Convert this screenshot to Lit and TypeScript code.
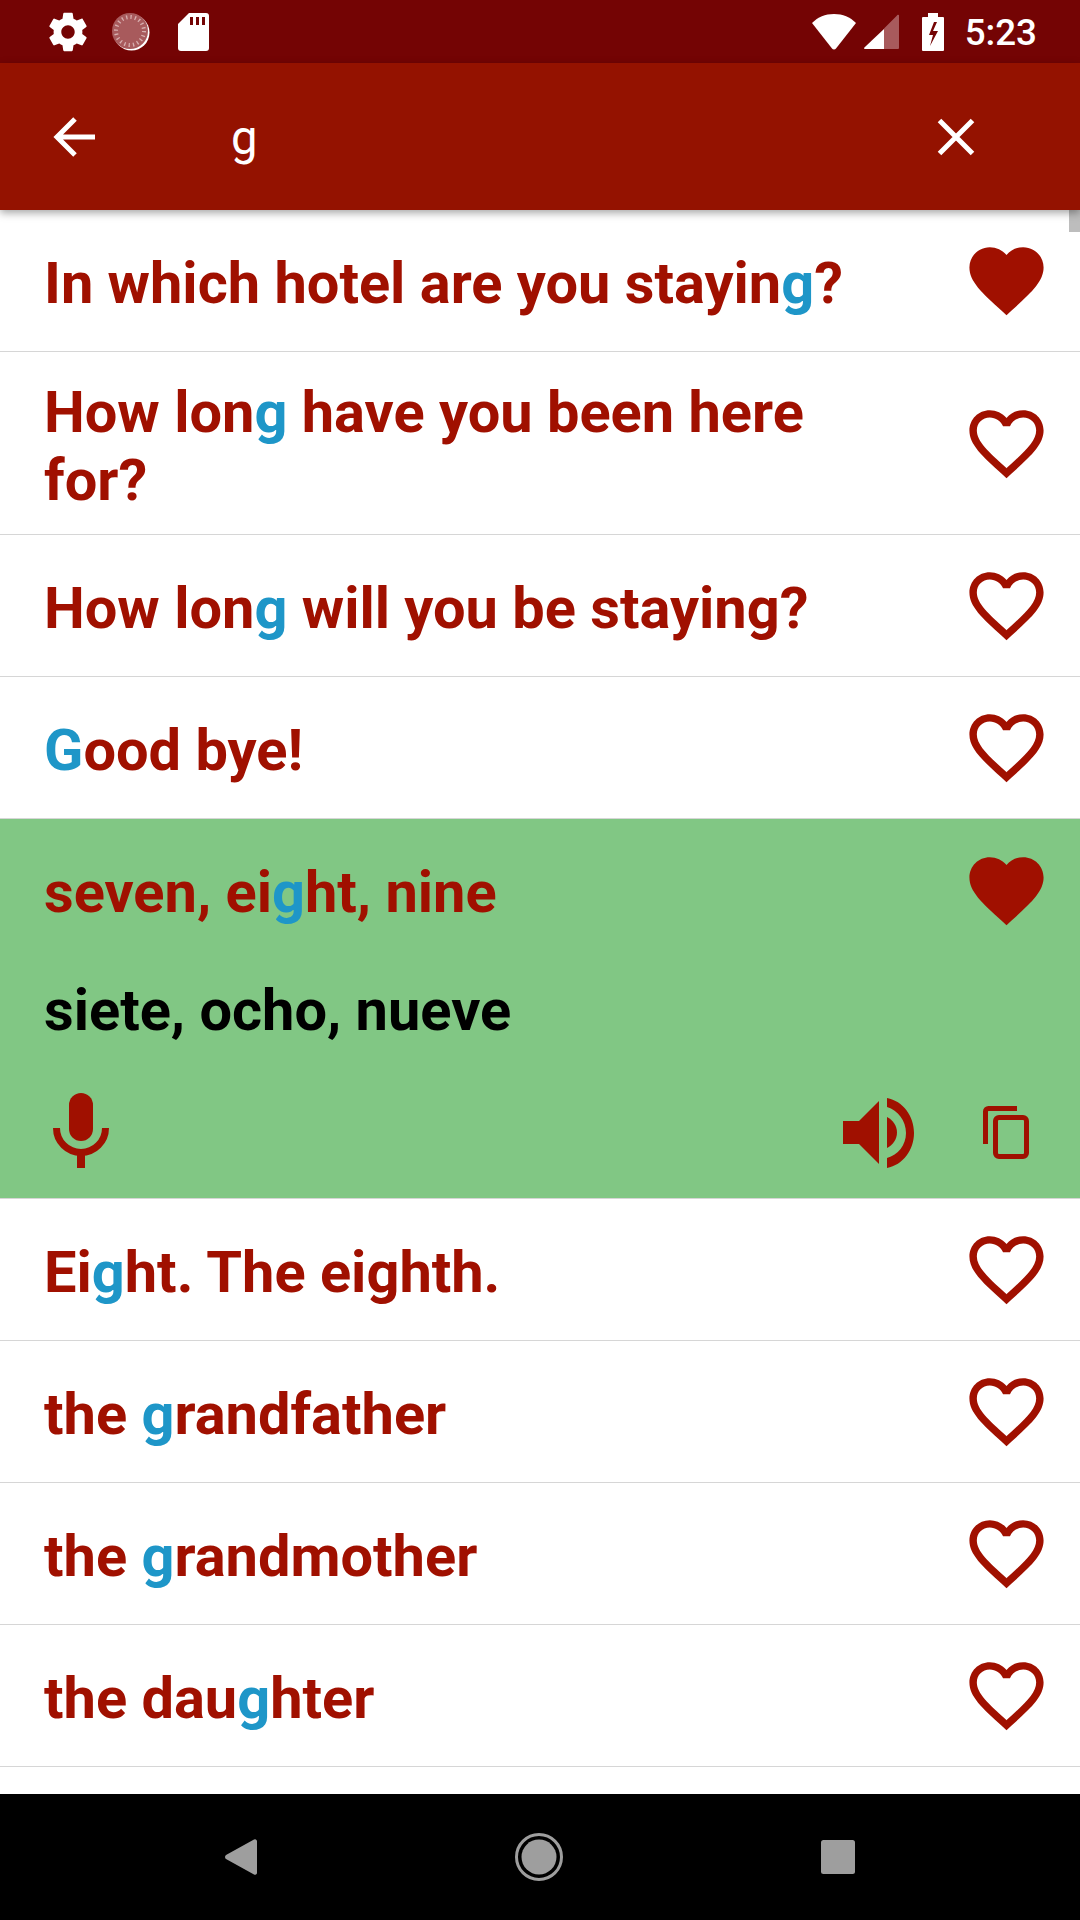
import { LitElement, html, css, svg } from "lit";
import { customElement } from "lit/decorators.js";

const heartPath = "M12 21.35l-1.45-1.32C5.4 15.36 2 12.28 2 8.5 2 5.42 4.42 3 7.5 3c1.74 0 3.41.81 4.5 2.09C13.09 3.81 14.76 3 16.5 3 19.58 3 22 5.42 22 8.5c0 3.78-3.4 6.86-8.55 11.54L12 21.35z";
const heartOutline = "M16.5 3c-1.74 0-3.41.81-4.5 2.09C10.91 3.81 9.24 3 7.5 3 4.42 3 2 5.42 2 8.5c0 3.78 3.4 6.86 8.55 11.54L12 21.35l1.45-1.32C18.6 15.36 22 12.28 22 8.5 22 5.42 19.58 3 16.5 3zm-4.4 15.55l-.1.1-.1-.1C7.14 14.24 4 11.39 4 8.5 4 6.5 5.5 5 7.5 5c1.54 0 3.04.99 3.57 2.36h1.87C13.46 5.99 14.96 5 16.5 5c2 0 3.5 1.5 3.5 3.5 0 2.89-3.14 5.74-7.9 10.05z";

type Seg = [string, boolean];
const parts = (t: string, hi: number[]): Seg[] => {
  const out: Seg[] = [];
  let p = 0;
  for (const i of hi) {
    if (i > p) out.push([t.slice(p, i), false]);
    out.push([t[i], true]);
    p = i + 1;
  }
  if (p < t.length) out.push([t.slice(p), false]);
  return out;
};

const rows = [
  { t: "In which hotel are you staying?", h: [29], fav: true },
  { t: "How long have you been here for?", h: [7], fav: false, two: true },
  { t: "How long will you be staying?", h: [7], fav: false },
  { t: "Good bye!", h: [0], fav: false },
  { t: "seven, eight, nine", h: [9], fav: true, open: "siete, ocho, nueve" },
  { t: "Eight. The eighth.", h: [2], fav: false },
  { t: "the grandfather", h: [4], fav: false },
  { t: "the grandmother", h: [4], fav: false },
  { t: "the daughter", h: [7], fav: false },
];

@customElement("app-root")
export class AppRoot extends LitElement {
  static styles = css`
    :host {
      display: flex;
      flex-direction: column;
      position: relative;
      width: 1080px;
      height: 1920px;
      overflow: hidden;
      background: #fff;
      font-family: Roboto, "Liberation Sans", sans-serif;
    }
    svg { display: block; flex: none; }
    .status {
      height: 63px;
      flex: none;
      background: #740404;
      display: flex;
      align-items: center;
      color: #fff;
    }
    .status-left { display: flex; align-items: center; padding-left: 45px; flex: 1; }
    .status-left .dial { margin-left: 21px; }
    .status-left .sd { margin-left: 28px; }
    .status-right { display: flex; align-items: center; padding-right: 43px; }
    .signal { margin-left: 8px; }
    .battery { margin-left: 23px; }
    .time { font-size: 36.75px; font-weight: 500; line-height: 63px; margin-left: 21px; position: relative; top: 1px; }
    .toolbar {
      height: 147px;
      flex: none;
      background: #941200;
      display: flex;
      align-items: center;
      color: #fff;
      position: relative;
      z-index: 2;
      box-shadow: 0 3px 8px rgba(0, 0, 0, 0.35);
    }
    .back { margin-left: 47px; }
    .query { font-size: 47.25px; margin-left: 132px; flex: 1; line-height: 147px; position: relative; top: 2px; }
    .close { margin-right: 104px; }
    .list { flex: 1; position: relative; overflow: hidden; }
    .scroll {
      position: absolute;
      top: 0;
      right: 0;
      width: 11px;
      height: 22px;
      background: #bdbdbd;
    }
    .row {
      display: flex;
      align-items: center;
      padding: 23px 0 23px 44px;
      border-bottom: 1px solid #d6d6d6;
      box-sizing: border-box;
      min-height: 142px;
    }
    .txt {
      flex: 1;
      font-size: 57.75px;
      line-height: 68px;
      font-weight: 700;
      color: #a01000;
      padding-right: 60px;
      position: relative;
      top: 2.5px;
    }
    .row.two .txt { top: 3px; }
    .open .txt { top: 2px; }
    .hi { color: #1e96c8; }
    .heart { margin-right: 29px; }
    .open {
      background: #81c784;
      height: 380px;
      flex: none;
      box-sizing: border-box;
      display: flex;
      flex-direction: column;
      padding-left: 44px;
      border-bottom: 1px solid #d6d6d6;
    }
    .open-top { display: flex; align-items: center; height: 142px; flex: none; }
    .trans { font-size: 57.75px; font-weight: 700; color: #000; line-height: 68px; height: 98px; flex: none; display: flex; align-items: center; }
    .actions { display: flex; align-items: center; flex: 1; padding-top: 8px; box-sizing: border-box; }
    .mic { margin-left: 9px; margin-top: -4px; }
    .spacer { flex: 1; }
    .copy { margin-left: 69px; margin-right: 51px; }
    .nav {
      height: 126px;
      flex: none;
      background: #000;
      display: flex;
      align-items: center;
      justify-content: center;
    }
    .nav-in { display: flex; align-items: center; justify-content: space-between; width: 630px; }
  `;

  heart(fav: boolean) {
    return html`<svg class="heart" width="89" height="89" viewBox="0 0 24 24" fill="#a01000">
      ${svg`<path d=${fav ? heartPath : heartOutline}></path>`}
    </svg>`;
  }

  text(r: { t: string; h: number[] }) {
    return html`<div class="txt">${parts(r.t, r.h).map(([s, on]) => (on ? html`<span class="hi">${s}</span>` : s))}</div>`;
  }

  render() {
    return html`
      <div class="status">
        <div class="status-left">
          <svg width="46" height="46" viewBox="0 0 24 24" fill="#fff"><path d="M19.43 12.98c.04-.32.07-.64.07-.98s-.03-.66-.07-.98l2.11-1.65c.19-.15.24-.42.12-.64l-2-3.46c-.12-.22-.39-.3-.61-.22l-2.49 1c-.52-.4-1.08-.73-1.69-.98l-.38-2.65C14.46 2.18 14.25 2 14 2h-4c-.25 0-.46.18-.49.42l-.38 2.65c-.61.25-1.17.59-1.69.98l-2.49-1c-.23-.09-.49 0-.61.22l-2 3.46c-.13.22-.07.49.12.64l2.11 1.65c-.04.32-.07.65-.07.98s.03.66.07.98l-2.11 1.65c-.19.15-.24.42-.12.64l2 3.46c.12.22.39.3.61.22l2.49-1c.52.4 1.08.73 1.69.98l.38 2.65c.03.24.24.42.49.42h4c.25 0 .46-.18.49-.42l.38-2.65c.61-.25 1.17-.59 1.69-.98l2.49 1c.23.09.49 0 .61-.22l2-3.46c.12-.22.07-.49-.12-.64l-2.11-1.65zM12 15.5c-1.93 0-3.5-1.57-3.5-3.5s1.57-3.5 3.5-3.5 3.5 1.57 3.5 3.5-1.57 3.5-3.5 3.5z"/></svg>
          <svg class="dial" width="38" height="38" viewBox="0 0 38 38">
            <circle cx="19.500" cy="19.500" r="18" fill="#fff"/>
            <circle cx="18" cy="18" r="18" fill="#a85a5c"/>
            <circle cx="18" cy="18" r="14" fill="none" stroke="#d8b0b0" stroke-width="4" stroke-dasharray="1.300 3.100"/>
          </svg>
          <svg class="sd" width="31" height="38" viewBox="0 0 31 38" fill="#fff"><path d="M11 0h17a3 3 0 0 1 3 3v32a3 3 0 0 1-3 3H3a3 3 0 0 1-3-3V11z"/><path fill="#740404" d="M12 4h3v8h-3zM18 4h3v8h-3zM24 4h3v8h-3z"/></svg>
        </div>
        <div class="status-right">
          <svg width="44" height="38" viewBox="0 0 44 38" fill="#fff"><path d="M0 10C6 4 13 1 22 1s16 3 22 9L24 35.500a2.600 2.600 0 0 1-4 0z"/></svg>
          <svg class="signal" width="35" height="36" viewBox="0 0 35 36"><path d="M33 1.500a1 1 0 0 1 2 .5v32a1 1 0 0 1-1 1H20V14.500z" fill="#a85a5c"/><path d="M20 15v20H1a1 1 0 0 1-.6-1.600z" fill="#fff"/></svg>
          <svg class="battery" width="22" height="38" viewBox="0 0 22 38"><path fill="#fff" fill-rule="evenodd" d="M6 0h10v4h5a1 1 0 0 1 1 1v32a1 1 0 0 1-1 1H1a1 1 0 0 1-1-1V5a1 1 0 0 1 1-1h5zM12 9L7 22h4l-3 11 8-15h-5l4-9z"/></svg>
          <span class="time">5:23</span>
        </div>
      </div>
      <div class="toolbar">
        <svg class="back" width="52" height="52" viewBox="0 0 52 52" fill="none" stroke="#fff" stroke-width="5"><path d="M48 26H10M28 8L10 26l18 18"/></svg>
        <span class="query">g</span>
        <svg class="close" width="40" height="40" viewBox="0 0 40 40" fill="none" stroke="#fff" stroke-width="5"><path d="M3.500 3.500l33 33M36.500 3.500l-33 33"/></svg>
      </div>
      <div class="list">
        ${rows.map((r) =>
          r.open
            ? html`<div class="open">
                <div class="open-top">${this.text(r)}${this.heart(r.fav)}</div>
                <div class="trans">${r.open}</div>
                <div class="actions">
                  <svg class="mic" width="56" height="75" viewBox="0 0 56 75" fill="#a01000"><rect x="16" y="0" width="24" height="48" rx="12"/><path fill="none" stroke="#a01000" stroke-width="7" d="M3.500 35a24.500 24.500 0 0 0 49 0"/><rect x="24" y="58" width="8" height="17"/></svg>
                  <div class="spacer"></div>
                  <svg width="71" height="70" viewBox="0 0 71 70" fill="#a01000"><path d="M0 23h16L36 3v63L16 46H0z"/><path d="M44 19c6 3 10 9 10 15.500s-4 12.500-10 15.500z"/><path d="M44 0c16 3 27 18 27 35S60 67 44 70V60c11-3 19-13 19-25S55 12 44 9z"/></svg>
                  <svg class="copy" width="46" height="53" viewBox="0 0 46 53" fill="none" stroke="#a01000" stroke-width="5"><path d="M2.500 38V5.500a3 3 0 0 1 3-3H34"/><rect x="12.500" y="11.500" width="31" height="39" rx="3.500"/></svg>
                </div>
              </div>`
            : html`<div class="row ${r.two ? "two" : ""}">${this.text(r)}${this.heart(r.fav)}</div>`
        )}
        <div class="scroll"></div>
      </div>
      <div class="nav">
        <div class="nav-in">
          <svg width="32" height="36" viewBox="0 0 32 36" fill="#9e9e9e"><path d="M29 .5a2 2 0 0 1 3 1.500v32a2 2 0 0 1-3 1.500L1 20a2.500 2.500 0 0 1 0-4z"/></svg>
          <svg width="48" height="48" viewBox="0 0 48 48"><circle cx="24" cy="24" r="22.500" fill="none" stroke="#9e9e9e" stroke-width="3"/><circle cx="24" cy="24" r="17.500" fill="#9e9e9e"/></svg>
          <svg width="34" height="34" viewBox="0 0 34 34"><rect width="34" height="34" rx="2.500" fill="#9e9e9e"/></svg>
        </div>
      </div>
    `;
  }
}
